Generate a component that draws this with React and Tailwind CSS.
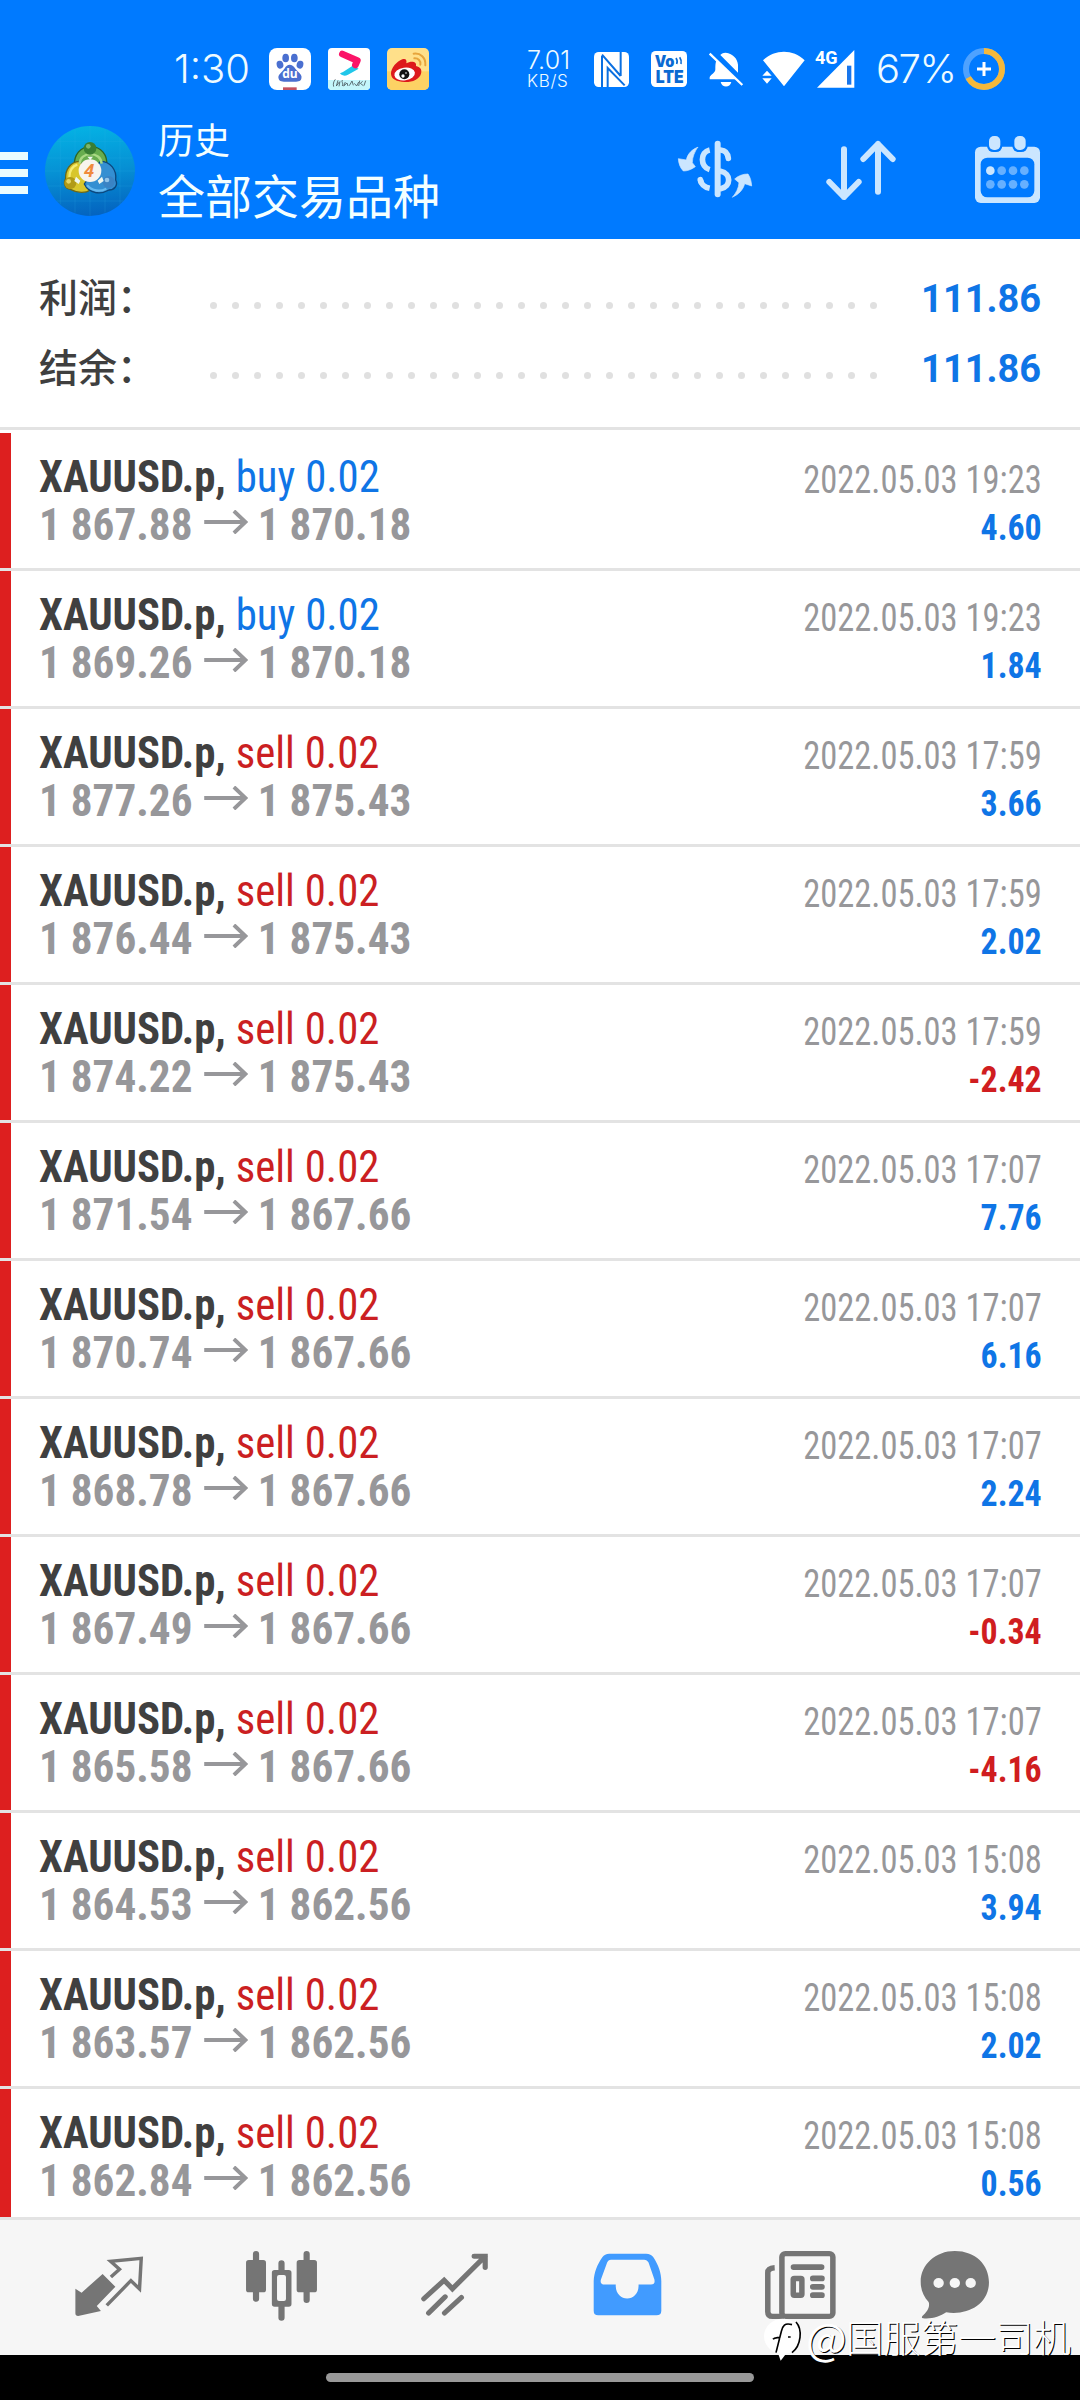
import React from 'react';

const DEALS = [
  { side: 'buy', open: '1 867.88', close: '1 870.18', time: '2022.05.03 19:23', profit: '4.60' },
  { side: 'buy', open: '1 869.26', close: '1 870.18', time: '2022.05.03 19:23', profit: '1.84' },
  { side: 'sell', open: '1 877.26', close: '1 875.43', time: '2022.05.03 17:59', profit: '3.66' },
  { side: 'sell', open: '1 876.44', close: '1 875.43', time: '2022.05.03 17:59', profit: '2.02' },
  { side: 'sell', open: '1 874.22', close: '1 875.43', time: '2022.05.03 17:59', profit: '-2.42' },
  { side: 'sell', open: '1 871.54', close: '1 867.66', time: '2022.05.03 17:07', profit: '7.76' },
  { side: 'sell', open: '1 870.74', close: '1 867.66', time: '2022.05.03 17:07', profit: '6.16' },
  { side: 'sell', open: '1 868.78', close: '1 867.66', time: '2022.05.03 17:07', profit: '2.24' },
  { side: 'sell', open: '1 867.49', close: '1 867.66', time: '2022.05.03 17:07', profit: '-0.34' },
  { side: 'sell', open: '1 865.58', close: '1 867.66', time: '2022.05.03 17:07', profit: '-4.16' },
  { side: 'sell', open: '1 864.53', close: '1 862.56', time: '2022.05.03 15:08', profit: '3.94' },
  { side: 'sell', open: '1 863.57', close: '1 862.56', time: '2022.05.03 15:08', profit: '2.02' },
  { side: 'sell', open: '1 862.84', close: '1 862.56', time: '2022.05.03 15:08', profit: '0.56' },
];

const SUMMARY = [
  { label: '利润：', value: '111.86' },
  { label: '结余：', value: '111.86' },
];

const BaiduIcon = () => (
  <svg viewBox="0 0 126 126" className="w-[42px] h-[42px] shrink-0 rounded-[8px] bg-white">
    <g fill="#4a6fd0">
      <ellipse cx="33" cy="50" rx="10" ry="12" transform="rotate(-15 33 50)" />
      <ellipse cx="50" cy="30" rx="10" ry="13" />
      <ellipse cx="76" cy="30" rx="10" ry="13" />
      <ellipse cx="93" cy="50" rx="10" ry="12" transform="rotate(15 93 50)" />
      <path d="M62 50c12 0 16 12 24 20 9 8 14 14 11 22-3 10-15 9-34 9s-31 1-34-9c-3-8 3-14 11-22 8-8 10-20 22-20z" />
    </g>
    <text x="63" y="91" textAnchor="middle" fontSize="36" fontWeight="700" fill="#fff" fontFamily="Open Sans, sans-serif">du</text>
    <rect x="42" y="118" width="41" height="8" fill="#c4515f" />
  </svg>
);

const VideoIcon = () => (
  <svg viewBox="0 0 126 126" className="w-[42px] h-[42px] shrink-0 rounded-[4px] bg-white">
    <rect y="96" width="126" height="30" fill="#c4f6fb" />
    <path d="M45 72 74 53 92 62 60 80c-12 7-22 0-24-4z" fill="#21c7ea" />
    <path d="M43 18 88 38 82 51" fill="none" stroke="#fb1468" strokeWidth="20" strokeLinecap="round" strokeLinejoin="round" />
    <path d="M22 94c-6 8-7 14-5 22M30 97l-5 17 9-12M36 100l-3 15M43 96c-4 8 5 8 0 18M52 102l-5 12 10-9 3 9M64 113l8-14 4 13M79 106l7 8 6-12M95 98l-3 16M104 100l-7 6 9 7M113 98l-5 15" stroke="#49575d" strokeWidth="2.5" fill="none" />
  </svg>
);

const WeiboIcon = () => (
  <svg viewBox="0 0 126 126" className="w-[42px] h-[42px] shrink-0 rounded-[5px]">
    <rect width="126" height="126" fill="#ffe08a" />
    <rect y="70" width="126" height="56" fill="#fdd264" />
    <path d="M80 17c20-3 37 12 35 35" stroke="#e7a53c" strokeWidth="6" fill="none" strokeLinecap="round" />
    <path d="M82 31c12-1 20 8 18 19" stroke="#e7a53c" strokeWidth="6" fill="none" strokeLinecap="round" />
    <path d="M12 78c-1-18 18-38 34-44 11-4 14 4 12 12 11-6 32-8 29 8 12 3 19 10 15 23-5 17-27 26-49 25C29 101 13 94 12 78z" fill="#dd1a1c" />
    <ellipse cx="53" cy="78" rx="31" ry="19" fill="#fff" transform="rotate(-8 53 78)" />
    <circle cx="52" cy="79" r="15" fill="#111" />
    <circle cx="48" cy="84" r="5" fill="#fff" />
    <circle cx="57" cy="75" r="2.5" fill="#fff" />
  </svg>
);

const StatusBar = () => (
  <div className="flex items-center h-[42px] text-[#eefaff] font-['Inter',sans-serif]">
    <span className="w-[95px] ml-[174px] text-[40px] leading-[42px] font-light">1:30</span>
    <BaiduIcon />
    <span className="w-[17px]" />
    <VideoIcon />
    <span className="w-[17px]" />
    <WeiboIcon />
    <div className="flex flex-col w-[44px] ml-[98px] mr-[23px] font-light whitespace-nowrap">
      <span className="text-[25px] leading-[25px] tracking-[0.2px]">7.01</span>
      <span className="text-[17px] leading-[17px] tracking-[0.7px]">KB/S</span>
    </div>
    <svg viewBox="0 0 105 105" className="w-[35px] h-[35px] shrink-0">
      <rect width="105" height="105" rx="14" fill="#fff" />
      <path d="M24 12v93M24 8l56 64M80 0v72M41 105V48l51 52" stroke="#0a6fe0" strokeWidth="6" fill="none" />
    </svg>
    <svg viewBox="0 0 108 108" className="w-[36px] h-[36px] ml-[22px] shrink-0">
      <rect width="108" height="108" rx="14" fill="#fff" />
      <g fill="#0b6ad2" fontFamily="Inter, sans-serif" fontWeight="900">
        <text x="11" y="47" fontSize="46" textLength="59" lengthAdjust="spacingAndGlyphs">Vo</text>
        <text x="14" y="97" fontSize="51" textLength="84" lengthAdjust="spacingAndGlyphs">LTE</text>
      </g>
      <path d="M75 21q6 9 2 18M86 19q7 10 4 20" stroke="#0b6ad2" strokeWidth="5" fill="none" />
    </svg>
    <svg viewBox="0 0 108 105" className="w-[36px] h-[35px] ml-[21px] shrink-0">
      <path d="M53 2c-9 0-13 4-16 7l53 53V38C88 20 76 5 53 2zM26 24c-4 8-4 17-4 28 0 12-15 16-17 24v6h79zM38 90h32c-4 18-28 18-32 0z" fill="#fff" />
      <path d="M5 5l98 94" stroke="#fff" strokeWidth="7" />
    </svg>
    <svg viewBox="0 0 129 108" className="w-[43px] h-[36px] ml-[18px] shrink-0" fill="#fff">
      <path d="M3 28C40-6 92-6 128 28L66 106zM1 74l14-15 14 15zM1 82h28L15 98z" />
    </svg>
    <svg viewBox="0 0 120 114" className="w-[40px] h-[38px] ml-[10px] shrink-0 overflow-visible" fill="#fff">
      <text x="0" y="43" fontSize="56" fontWeight="700" fontFamily="Roboto, sans-serif" textLength="68" lengthAdjust="spacingAndGlyphs">4G</text>
      <path d="M118 0v113H6z" />
      <path d="M96 47h13v57H96z" fill="#1876ec" />
    </svg>
    <span className="w-[87px] ml-[21px] text-[40px] leading-[42px] font-light tracking-[-1.5px]">67%</span>
    <svg viewBox="0 0 42 42" className="w-[42px] h-[42px] shrink-0" fill="none">
      <circle cx="21" cy="21" r="18" stroke="#4ea2ff" strokeWidth="6" />
      <circle cx="21" cy="21" r="18" stroke="#f5b83a" strokeWidth="6" pathLength="100" strokeDasharray="67 33" transform="rotate(-90 21 21)" />
      <path d="M21 14v14M14 21h14" stroke="#fff" strokeWidth="3" />
    </svg>
  </div>
);

const AppLogo = () => (
  <svg viewBox="0 0 270 270" className="w-[90px] h-[90px] ml-[17px] shrink-0">
    <defs>
      <linearGradient id="disc" x1="0.4" y1="0" x2="0.5" y2="1">
        <stop offset="0" stopColor="#04b2e4" />
        <stop offset="0.5" stopColor="#0690d4" />
        <stop offset="1" stopColor="#0463bf" />
      </linearGradient>
    </defs>
    <circle cx="135" cy="135" r="135" fill="url(#disc)" />
    <path d="M46 35v200M90 10v250M135 0v270M180 10v250M225 35v200M35 46h200M8 96h254M0 135h270M8 180h254M35 225h200" stroke="#35b5e8" strokeWidth="1.5" opacity="0.35" />
    <g strokeWidth="4">
      <path d="M88 120c-2-34 18-58 49-58s52 24 48 58l-20 34H108z" fill="#67ad4e" stroke="#2d6524" />
      <path d="M102 106c-26 2-42 26-40 52-8 14-2 30 14 32 22 12 46 12 60 2l4-50z" fill="#d8c62c" stroke="#6c6818" />
      <path d="M166 106c30 0 50 26 46 56 8 16-4 30-20 30-24 14-60 12-74-18l20-30z" fill="#348fd2" stroke="#0c477d" />
    </g>
    <path d="M104 113c0-38 64-38 66 0" stroke="#a9d984" strokeWidth="7" fill="none" />
    <path d="M73 154c-1-20 10-34 24-38" stroke="#f5ec75" strokeWidth="7" fill="none" />
    <path d="M126 178c16 18 40 20 58 10" stroke="#66b9ef" strokeWidth="7" fill="none" />
    <circle cx="135" cy="67" r="19" fill="#397e33" />
    <circle cx="130" cy="61" r="7" fill="#7db66c" />
    <circle cx="76" cy="171" r="18" fill="#b19a17" />
    <circle cx="71" cy="166" r="7" fill="#e4d563" />
    <circle cx="191" cy="168" r="18" fill="#3a83c4" />
    <circle cx="186" cy="162" r="7" fill="#91c4ea" />
    <path d="M127 92h17l-8 10zM93 152l13 12-5 10-13-9zM171 152l-13 12 5 10 13-9z" fill="#eef6ef" />
    <circle cx="135" cy="134" r="34" fill="#f7f4ee" />
    <text x="133" y="154" textAnchor="middle" fontSize="54" fontWeight="700" fontStyle="italic" fill="#f08a3c" fontFamily="Open Sans, sans-serif">4</text>
  </svg>
);

const Header = () => (
  <header className="h-[239px] pt-[48px] bg-[#007aff]">
    <StatusBar />
    <div className="flex items-center h-[100px] mt-[31px]">
      <div className="flex flex-col gap-[9px] w-[28px] pt-[4px]">
        <span className="h-2 bg-[#eafcff]" />
        <span className="h-2 bg-[#eafcff]" />
        <span className="h-2 bg-[#eafcff]" />
      </div>
      <AppLogo />
      <div className="flex flex-col w-[519px] pl-[23px] mb-[3px] text-[#f4ffff] font-['Noto_Sans_CJK_SC',sans-serif]">
        <span className="text-[36px] leading-[48px]">历史</span>
        <span className="text-[47px] leading-[64px]">全部交易品种</span>
      </div>
      <svg viewBox="51 60 228 174" className="w-[76px] h-[58px] mb-[4px] ml-[23px] shrink-0" fill="none" stroke="#cbe6ff" strokeLinecap="round">
        <path d="M173 71V223" strokeWidth="18" />
        <path d="M149 90C120 96 120 140 149 149M121 180C124 194 134 202 149 205" strokeWidth="17" strokeLinecap="butt" />
        <path d="M121 179l2 7M182 90C196 91 203 98 205 115M182 154C214 160 214 200 182 206" strokeWidth="17" />
        <path d="M113 82C98 87 83 100 79 120L55 116C56 130 60 143 70 153 82 153 93 149 106 140L97 128C97 110 105 94 113 82zM218 231C236 224 250 208 254 191L275 198C274 184 271 172 264 162 249 162 235 167 224 177L237 188C236 205 228 219 218 231z" fill="#cbe6ff" stroke="#cbe6ff" strokeWidth="2" />
      </svg>
      <svg viewBox="498 60 210 180" className="w-[70px] h-[60px] ml-[73px] mb-[2px] shrink-0" fill="none" stroke="#cbe6ff" strokeWidth="18" strokeLinecap="round" strokeLinejoin="round">
        <path d="M552 88v143M508 186l44 45 44-45M654 215V72M610 117l44-45 44 45" />
      </svg>
      <svg viewBox="942 45 201 207" className="w-[67px] h-[69px] ml-[78px] mb-[3px] shrink-0">
        <rect x="945" y="80" width="195" height="169" rx="17" fill="#cbe6ff" />
        <rect x="962" y="113" width="161" height="119" rx="20" fill="#007aff" />
        <rect x="981" y="42" width="46" height="54" rx="19" fill="#007aff" />
        <rect x="1057" y="42" width="46" height="54" rx="19" fill="#007aff" />
        <rect x="987" y="48" width="34" height="42" rx="15" fill="#cbe6ff" />
        <rect x="1063" y="48" width="34" height="42" rx="15" fill="#cbe6ff" />
        <g fill="#66b0ff">
          <circle cx="991" cy="152" r="13" fill="#cbe6ff" />
          <circle cx="1025" cy="152" r="13" />
          <circle cx="1059" cy="152" r="13" />
          <circle cx="1093" cy="152" r="13" />
          <circle cx="991" cy="193" r="13" />
          <circle cx="1025" cy="193" r="13" />
          <circle cx="1059" cy="193" r="13" />
          <circle cx="1093" cy="193" r="13" />
        </g>
      </svg>
    </div>
  </header>
);

const Summary = () => (
  <section className="h-[194px] pt-[25px]">
    {SUMMARY.map(item => (
      <div key={item.label} className="flex items-center h-[70px] pl-[39px] pr-[39px]">
        <span className="w-[171px] mb-[8px] text-[39px] font-medium text-[#3f3f3f] whitespace-nowrap font-['Noto_Sans_CJK_SC',sans-serif]">{item.label}</span>
        <div className="flex gap-[15px] pt-[13px]">
          {Array.from({ length: 31 }, (_, i) => (
            <span key={i} className="size-[7px] rounded-full bg-[#e0e0e0]" />
          ))}
        </div>
        <span className="ml-auto text-[39px] leading-[70px] font-bold text-[#0f75e6] origin-right scale-x-[0.975] font-['Roboto',sans-serif]">{item.value}</span>
      </div>
    ))}
    <div className="h-[3px] mt-[23px] bg-[#e3e3e3]" />
  </section>
);

const DealRow = ({ deal }) => (
  <div className="flex justify-between h-[138px] border-b-[3px] border-[#e3e3e3] font-['Roboto_Condensed','Roboto',sans-serif] [font-stretch:75%]">
    <span className="w-[11px] bg-[#dd1f1f]" />
    <div className="flex-1 pl-[28px] pt-[20px] text-[45px] leading-[48px]">
      <div className="origin-left scale-x-[0.951]">
        <span className="font-bold text-[#404040]">XAUUSD.p, </span>
        <span className={deal.side === 'buy' ? 'text-[#0f75e6]' : 'text-[#cb1f22]'}>{deal.side} 0.02</span>
      </div>
      <div className="flex items-center font-bold text-[#97979a] origin-left scale-x-[0.96]">
        <span>{deal.open}</span>
        <svg viewBox="0 0 46 24" className="w-[46px] h-[24px] ml-[12px] mr-[10px] mb-[6px]" fill="none" stroke="#97979a" strokeWidth="4">
          <path d="M0 12h43M31 1l12 11-12 11" />
        </svg>
        <span>{deal.close}</span>
      </div>
    </div>
    <div className="pt-[23px] pr-[38px] text-right leading-[48px]">
      <div className="text-[38px] text-[#97979a] origin-right scale-x-[0.908]">{deal.time}</div>
      <div className={deal.profit.startsWith('-') ? 'text-[37px] font-bold text-[#d01d20] origin-right scale-x-[0.915]' : 'text-[37px] font-bold text-[#0f75e6] origin-right scale-x-[0.915]'}>{deal.profit}</div>
    </div>
  </div>
);

const NavBar = () => (
  <nav className="flex items-start h-[138px] pl-[22px] pt-[30px] border-t-[3px] border-[#e3e3e3] bg-[#f6f6f6]">
    <div className="flex justify-center w-[173px]">
      <svg viewBox="214 168 203 183" preserveAspectRatio="none" className="w-[70px] h-[61px] mt-[6px]">
        <path d="M297 222 334 260 280 318 292 333 226 348Q218 348 218 340V266L236 278z" fill="#757575" />
        <path d="M309 316 379 242 404 267 409 175 320 184 346 208 321 231" fill="none" stroke="#757575" strokeWidth="10" />
      </svg>
    </div>
    <div className="flex justify-center w-[173px]">
      <svg viewBox="710 150 212 213" preserveAspectRatio="none" className="w-[73px] h-[71px]">
        <path d="M742 162v134M816 190v163M889 162v138" stroke="#757575" strokeWidth="18" strokeLinecap="round" />
        <rect x="713" y="180" width="58" height="97" rx="8" fill="#757575" />
        <rect x="860" y="180" width="59" height="97" rx="8" fill="#757575" />
        <rect x="788" y="210" width="57" height="110" rx="8" fill="#757575" />
        <rect x="803" y="225" width="26" height="78" rx="6" fill="#f6f6f6" />
      </svg>
    </div>
    <div className="flex justify-center w-[173px]">
      <svg viewBox="1218 160 200 190" preserveAspectRatio="none" className="w-[69px] h-[63px] mt-[3px]" fill="none" stroke="#757575" strokeWidth="15" strokeLinecap="round">
        <path d="M1229 298 1288 242 1312 268 1407 170M1375 170h32v34M1243 341l48-49M1289 341l49-47" />
      </svg>
    </div>
    <div className="flex justify-center w-[173px]">
      <svg viewBox="154 160 200 190" preserveAspectRatio="none" className="w-[69px] h-[63px] mt-[3px]">
        <path d="M201 162H308Q322 162 329 173C343 195 352 220 352 245V334Q352 348 338 348H169Q156 348 156 334V245C157 220 166 195 181 173Q188 162 201 162z" fill="#419bff" />
        <path d="M206 180H302Q311 180 315 189L332 240Q335 255 322 255H286C289 311 217 311 220 255H188Q173 255 177 240L195 189Q198 180 206 180z" fill="#f6f6f6" />
      </svg>
    </div>
    <div className="flex justify-center w-[173px]">
      <svg viewBox="652 150 212 209" preserveAspectRatio="none" className="w-[73px] h-[70px]" fill="none" stroke="#757575">
        <rect x="704" y="161" width="148" height="187" rx="10" strokeWidth="16" />
        <path d="M683 203Q663 204 663 218V334Q663 348 677 348H710" strokeWidth="16" />
        <path d="M738 201h81M794 235h26M794 260h26M794 285h26" strokeWidth="17" strokeLinecap="round" />
        <rect x="737" y="235" width="25" height="50" rx="3" strokeWidth="16" />
      </svg>
    </div>
    <div className="flex justify-center w-[135px]">
      <svg viewBox="1104 150 203 210" preserveAspectRatio="none" className="w-[70px] h-[70px]">
        <path d="M1205 153C1265 153 1304 194 1304 247 1304 312 1244 347 1180 337 1162 349 1138 358 1113 355Q1107 353 1111 348C1124 336 1134 321 1129 306 1114 289 1106 270 1106 245 1106 194 1149 153 1205 153z" fill="#757575" />
        <circle cx="1158" cy="249" r="15" fill="#f6f6f6" />
        <circle cx="1205" cy="249" r="15" fill="#f6f6f6" />
        <circle cx="1251" cy="249" r="15" fill="#f6f6f6" />
      </svg>
    </div>
  </nav>
);

const Watermark = () => (
  <div className="absolute right-[9px] top-[2310px] flex items-center text-white whitespace-nowrap font-['Noto_Sans_CJK_SC',sans-serif] [text-shadow:1px_1px_0_#000]">
    <svg viewBox="0 0 114 132" className="w-[38px] h-[44px] mt-[8px] mr-[4px]">
      <ellipse cx="56" cy="55" rx="56" ry="53" fill="#fff" />
      <path d="M40 100 50 128 72 100z" fill="#fff" />
      <path d="M84 20C62 13 56 24 52 40L36 104M27 64c4-6 12-4 22-6M96 12C116 34 112 82 84 104M72 57h8" fill="none" stroke="#000" strokeWidth="5" />
    </svg>
    <span className="w-[40px] text-[43px] leading-[44px] font-normal">@</span>
    <span className="text-[37.5px] leading-[44px] font-light">国服第一司机</span>
  </div>
);

export default function App() {
  return (
    <div className="relative flex flex-col w-[1080px] h-[2400px] overflow-hidden bg-white">
      <Header />
      <Summary />
      <main className="h-[1784px] overflow-hidden">
        {DEALS.map((deal, i) => <DealRow key={i} deal={deal} />)}
      </main>
      <NavBar />
      <div className="flex justify-center h-[45px] pt-[18px] bg-black">
        <span className="w-[428px] h-[9px] rounded-full bg-[#999999]" />
      </div>
      <Watermark />
    </div>
  );
}
